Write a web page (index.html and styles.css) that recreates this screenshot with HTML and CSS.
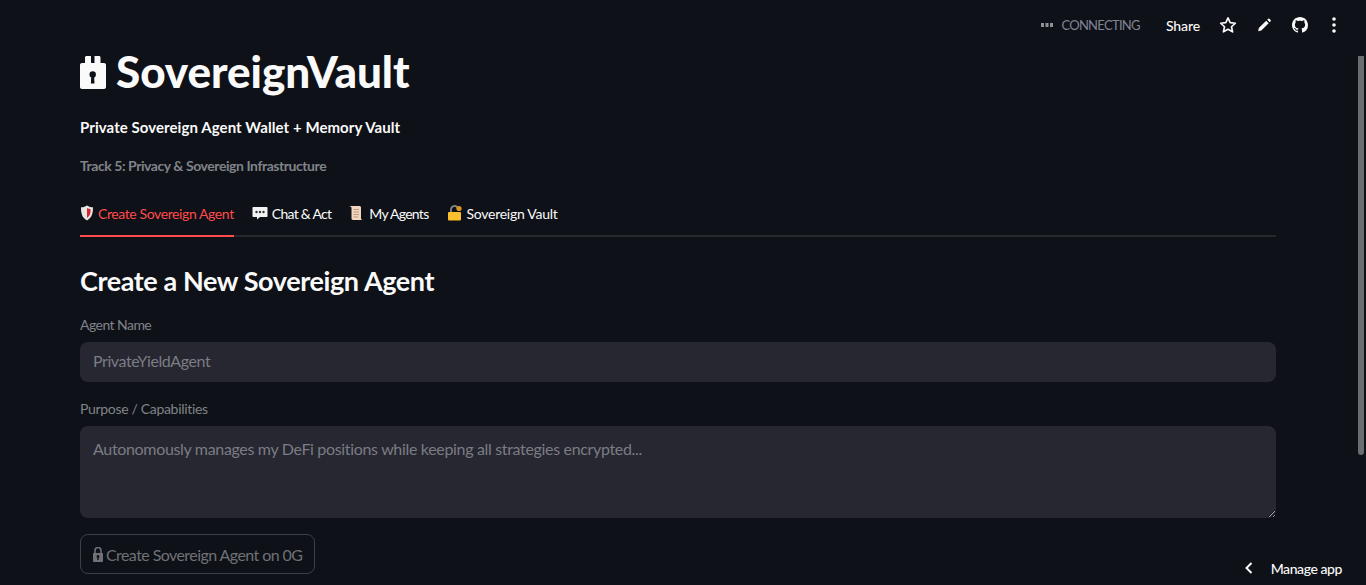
FILE: index.html
```html
<!DOCTYPE html>
<html lang="en">
<head>
    <meta charset="UTF-8">
    <meta name="viewport" content="width=device-width, initial-scale=1.0">
    <title>SovereignVault</title>
    <link rel="stylesheet" href="styles.css">
</head>
<body>
    <!-- Barra superior -->
    <header class="toolbar">
        <span class="status">
            <svg class="status-dots" width="12" height="4" viewBox="0 0 12 4"><rect width="3" height="4" fill="#8f9298"/><rect x="4.500" width="3" height="4" fill="#8f9298"/><rect x="9" width="3" height="4" fill="#8f9298"/></svg>
            CONNECTING
        </span>
        <span class="share">Share</span>
        <svg class="tool-icon" width="20" height="20" viewBox="0 0 24 24"><path d="M12 3.500l2.600 5.700 6.200.7-4.600 4.200 1.300 6.100L12 17.100l-5.500 3.100 1.300-6.100-4.600-4.200 6.200-.7z" fill="none" stroke="#fafafa" stroke-width="2" stroke-linejoin="round"/></svg>
        <svg class="tool-icon" width="20" height="20" viewBox="0 0 24 24"><path d="M5 19.500l.8-3.800 8.800-8.800 3 3-8.800 8.800zM15.900 5.600l1.100-1.100a1 1 0 0 1 1.400 0l1.600 1.600a1 1 0 0 1 0 1.400l-1.100 1.100z" fill="#fafafa"/></svg>
        <svg class="tool-icon" width="20" height="20" viewBox="-2 -2 20 20"><path fill="#fafafa" d="M8 0C3.580 0 0 3.580 0 8c0 3.540 2.290 6.530 5.470 7.590.4.070.55-.17.55-.38 0-.19-.01-.82-.01-1.490-2.010.37-2.530-.49-2.690-.94-.09-.23-.48-.94-.82-1.130-.28-.15-.68-.52-.01-.53.630-.01 1.080.58 1.230.82.720 1.210 1.870.87 2.330.66.070-.52.280-.87.510-1.070-1.780-.2-3.640-.89-3.640-3.950 0-.87.310-1.590.82-2.150-.08-.2-.36-1.020.08-2.120 0 0 .67-.21 2.200.82.640-.18 1.320-.27 2-.27s1.360.09 2 .27c1.530-1.040 2.200-.82 2.200-.82.440 1.100.16 1.920.08 2.120.51.560.82 1.270.82 2.150 0 3.070-1.870 3.750-3.650 3.950.29.250.54.730.54 1.480 0 1.070-.01 1.930-.01 2.200 0 .21.150.46.55.38A8.010 8.010 0 0 0 16 8c0-4.420-3.580-8-8-8z"/></svg>
        <svg class="tool-icon tool-menu" width="20" height="20" viewBox="0 0 20 20"><circle cx="10" cy="4" r="1.800" fill="#fafafa"/><circle cx="10" cy="10" r="1.800" fill="#fafafa"/><circle cx="10" cy="16" r="1.800" fill="#fafafa"/></svg>
    </header>

    <main class="container">
        <h1 class="title">
            <svg class="title-lock" width="26" height="33" viewBox="0 0 26 33"><path d="M5 8V1.500C5 .6 5.600 0 6.500 0H11v8zM14.500 0H19c.9 0 1.500.6 1.500 1.500V8h-6z" fill="#fafafa"/><path d="M2 7h22c1.200 0 2 .8 2 2v22c0 1.200-.8 2-2 2H2c-1.200 0-2-.8-2-2V9c0-1.200.8-2 2-2z" fill="#fafafa"/><circle cx="12.700" cy="18.500" r="3.200" fill="#0e1117"/><path d="M11.300 20h2.800l.4 7.500h-3.600z" fill="#0e1117"/></svg>
            SovereignVault
        </h1>
        <p class="subtitle">Private Sovereign Agent Wallet + Memory Vault</p>
        <p class="track">Track 5: Privacy &amp; Sovereign Infrastructure</p>

        <nav class="tabs">
            <a class="tab active">
                <svg width="14" height="16" viewBox="0 0 14 16"><path d="M7 .500c2 1.300 4 1.800 6 1.800 0 6-1 10.500-6 13.200C2 12.800 1 8.300 1 2.300 3 2.300 5 1.800 7 .500z" fill="#e8e6e3"/><path d="M7 3c1.200.7 2.400 1.100 3.700 1.200 0 4-.8 6.800-3.700 8.700z" fill="#d8222f"/></svg>
                Create Sovereign Agent
            </a>
            <a class="tab tab-tight">
                <svg width="16" height="14" viewBox="0 0 16 14"><path d="M1.500 1h13c.6 0 1 .4 1 1v8c0 .6-.4 1-1 1H8l-3 2.500V11H1.500c-.6 0-1-.4-1-1V2c0-.6.4-1 1-1z" fill="#f2f2f2"/><circle cx="4.500" cy="6" r="1.200" fill="#33363b"/><circle cx="8" cy="6" r="1.200" fill="#33363b"/><circle cx="11.500" cy="6" r="1.200" fill="#33363b"/></svg>
                Chat &amp; Act
            </a>
            <a class="tab tab-tight">
                <svg width="16" height="16" viewBox="0 0 16 16"><path d="M0 1h10.500c1 0 1.500.8 1.500 1.800V13c0 1 .6 1.700 1.500 2H4C3 15 2.500 14.300 2.500 13.300V3C2.500 2 1.500 1 0 1z" fill="#f3d6bd"/><path d="M4.500 4.500h5.500M4.500 7h5.500M4.500 9.500h5.500M4.500 12h4.500" stroke="#b99a84" stroke-width="1"/></svg>
                My Agents
            </a>
            <a class="tab tab-loose">
                <svg width="16" height="16" viewBox="0 0 16 16"><path d="M4 7.500V4.500a3.500 3.500 0 0 1 6.800-1.200" fill="none" stroke="#85878b" stroke-width="1.800"/><circle cx="12" cy="3.500" r="2.600" fill="#d9981a"/><rect x="1" y="7" width="13" height="8.500" rx="1" fill="#fbc02d"/></svg>
                Sovereign Vault
            </a>
        </nav>

        <h2 class="section-title">Create a New Sovereign Agent</h2>

        <label class="field-label">Agent Name</label>
        <input class="text-input" type="text" placeholder="PrivateYieldAgent">

        <label class="field-label purpose-label">Purpose / Capabilities</label>
        <textarea class="text-area" placeholder="Autonomously manages my DeFi positions while keeping all strategies encrypted..."></textarea>

        <button class="submit" disabled>
            <svg width="10" height="15" viewBox="0 0 10 15"><path d="M2 6.500V3.500a3 3 0 0 1 6 0v3" fill="none" stroke="#6f7176" stroke-width="1.600"/><path fill-rule="evenodd" d="M.800 6h8.400c.4 0 .8.400.8.800v7.400c0 .4-.4.800-.8.800H.800c-.4 0-.8-.4-.8-.8V6.800C0 6.400.4 6 .800 6zM5 8a1.500 1.500 0 0 0-.7 2.800V13h1.400v-2.200A1.500 1.500 0 0 0 5 8z" fill="#6f7176"/></svg>
            Create Sovereign Agent on 0G
        </button>
    </main>

    <div class="scroll-thumb"></div>

    <div class="manage">
        <svg width="10" height="14" viewBox="0 0 10 14"><path d="M7.500 2L2.500 7l5 5" fill="none" stroke="#fafafa" stroke-width="2"/></svg>
        <span>Manage app</span>
    </div>
</body>
</html>
```
FILE: styles.css
```css
/* Estilo Global */
html, body {
    height: 100%;
}

body {
    margin: 0;
    overflow: hidden;
    background: #0e1117;
    color: #fafafa;
    font-family: 'Lato', 'Noto Sans', sans-serif;
}

.toolbar {
    position: absolute;
    top: 0;
    right: 0;
    height: 50px;
    display: flex;
    align-items: center;
    padding-right: 22px;
}

.status {
    display: flex;
    align-items: center;
    gap: 8px;
    margin-right: 26px;
    font-size: 13px;
    letter-spacing: -0.7px;
    color: #808495;
}

.share {
    margin-right: 18px;
    font-size: 14px;
    font-weight: 500;
    letter-spacing: -0.1px;
}

.tool-icon {
    display: block;
    margin-left: 16px;
}

.share + .tool-icon {
    margin-left: 0;
}

.tool-icon.tool-menu {
    margin-left: 14px;
}

.container {
    width: 1196px;
    margin-left: 80px;
    padding-top: 43px;
}

.title {
    display: flex;
    align-items: center;
    gap: 10px;
    height: 56px;
    margin: 0;
    font-size: 44px;
    font-weight: 900;
    letter-spacing: -0.05px;
    line-height: 56px;
}

.title-lock {
    margin-top: 3px;
}

.subtitle {
    margin: 20px 0 0;
    font-size: 15px;
    font-weight: 700;
    letter-spacing: 0.07px;
    line-height: 16px;
}

.track {
    margin: 23px 0 0;
    font-size: 14px;
    font-weight: 700;
    letter-spacing: -0.44px;
    color: #808389;
    line-height: 16px;
}

.tabs {
    display: flex;
    gap: 18px;
    margin-top: 15px;
    border-bottom: 2px solid #26282e;
    box-sizing: border-box;
    height: 48px;
}

.tab {
    display: flex;
    align-items: center;
    gap: 4px;
    height: 48px;
    padding-top: 2px;
    box-sizing: border-box;
    border-bottom: 2px solid transparent;
    font-size: 14px;
    letter-spacing: -0.4px;
    color: #fafafa;
}

.tab-tight {
    letter-spacing: -0.72px;
}

.tab-loose {
    letter-spacing: -0.26px;
}

.tab.active {
    color: #ff4b4b;
    border-bottom-color: #ff4b4b;
}

.section-title {
    margin: 24px 0 0;
    font-size: 27px;
    font-weight: 700;
    letter-spacing: -0.4px;
    line-height: 40px;
}

.field-label {
    display: block;
    margin-top: 14px;
    font-size: 14px;
    letter-spacing: -0.55px;
    line-height: 20px;
    color: #808389;
}

.field-label.purpose-label {
    margin-top: 17px;
    letter-spacing: -0.32px;
}

.text-input,
.text-area {
    display: block;
    width: 100%;
    box-sizing: border-box;
    margin-top: 7px;
    border: none;
    border-radius: 8px;
    outline: none;
    background: #262730;
    color: #fafafa;
    font-family: inherit;
    font-size: 16px;
    letter-spacing: -0.33px;
}

.text-input {
    height: 40px;
    padding: 0 13px 4px;
    letter-spacing: -0.42px;
}

.text-area {
    height: 92px;
    padding: 13px 13px;
    line-height: 20px;
}

.text-input::placeholder,
.text-area::placeholder {
    color: #7b7c84;
    opacity: 1;
}

.submit {
    display: flex;
    align-items: center;
    gap: 3px;
    height: 40px;
    margin-top: 16px;
    padding: 0 12px;
    border: 1px solid #3d3f46;
    border-radius: 8px;
    background: transparent;
    color: #6f7176;
    font-family: inherit;
    font-size: 16px;
    letter-spacing: -0.57px;
}

.scroll-thumb {
    position: absolute;
    top: 56px;
    right: 2px;
    width: 6px;
    height: 399px;
    border-radius: 0 0 3px 3px;
    background: #6b6d71;
}

.manage {
    position: absolute;
    right: 24px;
    bottom: 5px;
    display: flex;
    align-items: center;
    gap: 17px;
    height: 24px;
    font-size: 14px;
    font-weight: 500;
    letter-spacing: -0.42px;
}
```
